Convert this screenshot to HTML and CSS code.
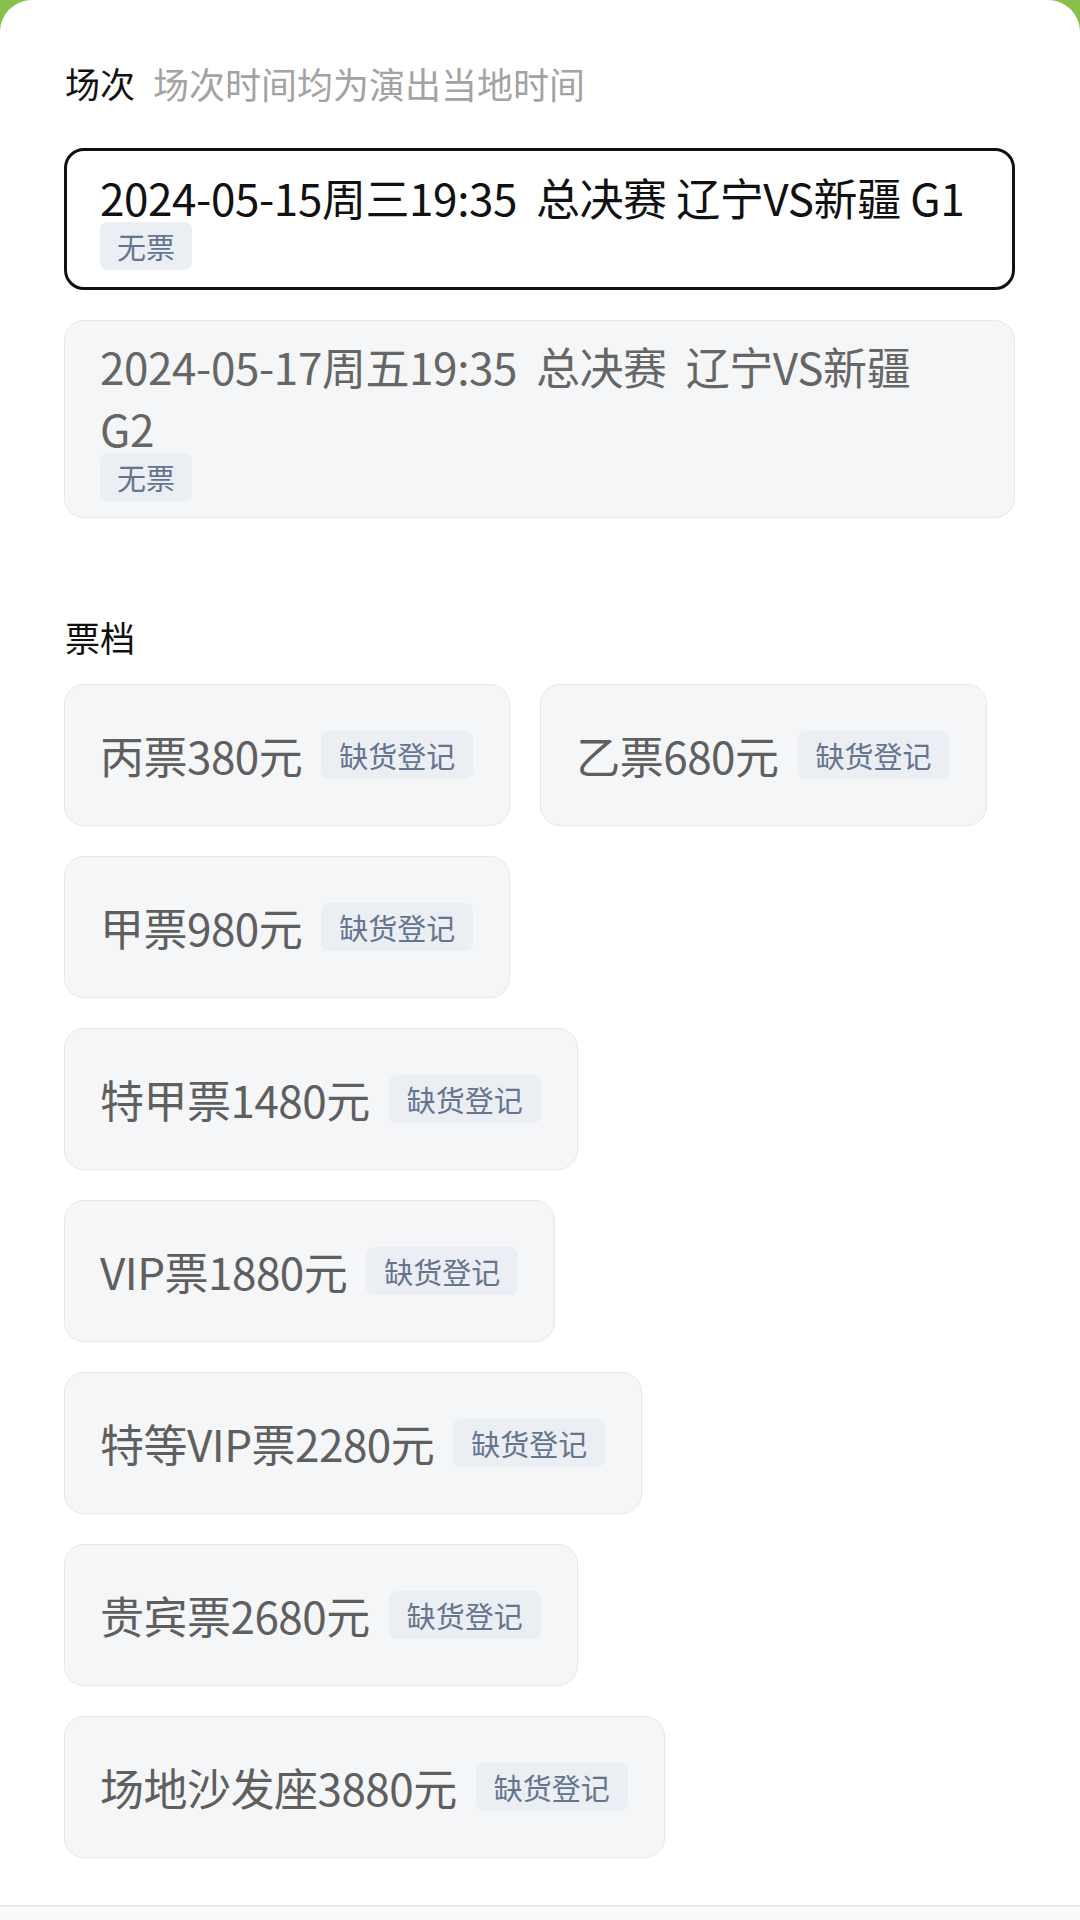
FILE: index.html
```html
<!DOCTYPE html>
<html lang="zh-CN">
<head>
<meta charset="utf-8">
<title>场次与票档</title>
<link rel="stylesheet" href="styles.css">
</head>
<body>
<div class="sheet">
  <section class="section">
    <div class="heading">
      <span class="heading-title">场次</span>
      <span class="heading-note">场次时间均为演出当地时间</span>
    </div>
    <div class="sessions">
      <div class="session session-active">
        <div class="session-name">2024-05-15周三19:35&nbsp; 总决赛 辽宁VS新疆 G1</div>
        <span class="tag">无票</span>
      </div>
      <div class="session">
        <div class="session-name">2024-05-17周五19:35&nbsp; 总决赛&nbsp; 辽宁VS新疆<br>G2</div>
        <span class="tag">无票</span>
      </div>
    </div>
  </section>

  <section class="section section-tickets">
    <div class="heading">
      <span class="heading-title">票档</span>
    </div>
    <div class="tickets">
      <div class="ticket"><span class="ticket-name">丙票380元</span><span class="tag">缺货登记</span></div>
      <div class="ticket"><span class="ticket-name">乙票680元</span><span class="tag">缺货登记</span></div>
      <div class="ticket"><span class="ticket-name">甲票980元</span><span class="tag">缺货登记</span></div>
      <div class="ticket"><span class="ticket-name">特甲票1480元</span><span class="tag">缺货登记</span></div>
      <div class="ticket"><span class="ticket-name">VIP票1880元</span><span class="tag">缺货登记</span></div>
      <div class="ticket"><span class="ticket-name">特等VIP票2280元</span><span class="tag">缺货登记</span></div>
      <div class="ticket"><span class="ticket-name">贵宾票2680元</span><span class="tag">缺货登记</span></div>
      <div class="ticket"><span class="ticket-name">场地沙发座3880元</span><span class="tag">缺货登记</span></div>
    </div>
  </section>
  <div class="bottom-bar"></div>
</div>
</body>
</html>
```

FILE: styles.css
```css
* {
  box-sizing: border-box;
}

html, body {
  margin: 0;
  padding: 0;
}

body {
  width: 1080px;
  height: 1920px;
  overflow: hidden;
  background: #89bf4d;
  font-family: "Noto Sans CJK SC", "Noto Sans", sans-serif;
}

.sheet {
  background: #ffffff;
  border-radius: 32px 32px 0 0;
  height: 1920px;
  padding: 59px 65px 0 64px;
  display: flex;
  flex-direction: column;
}

.heading {
  display: flex;
  align-items: center;
  height: 48px;
  line-height: 48px;
  margin-left: 1px;
}

.heading-title {
  font-size: 35px;
  color: #111111;
}

.heading-note {
  font-size: 36px;
  color: #a3a3a3;
  margin-left: 18px;
}

.sessions {
  display: flex;
  flex-direction: column;
  gap: 30px;
  margin-top: 41px;
}

.session {
  display: flex;
  flex-direction: column;
  align-items: flex-start;
  background: #f5f6f8;
  border: 1px solid #e6e7ea;
  border-radius: 20px;
  padding: 14px 34px 16px 35px;
}

.session-active {
  background: #ffffff;
  border: 3px solid #111111;
  padding: 15px 32px 17px 33px;
}

.session-name {
  font-size: 44px;
  line-height: 62px;
  letter-spacing: -0.4px;
  color: #666666;
  white-space: nowrap;
}

.session-active .session-name {
  color: #111111;
}

.session .tag {
  margin-top: -6px;
}

.tag {
  display: inline-block;
  height: 48px;
  line-height: 48px;
  padding: 0 17px;
  font-size: 29px;
  color: #66758f;
  background: #ebeef3;
  border-radius: 8px;
  white-space: nowrap;
}

.ticket .tag {
  padding: 0 18px;
}

.section-tickets {
  margin-top: 95px;
}

.tickets {
  display: flex;
  flex-wrap: wrap;
  align-items: flex-start;
  gap: 30px;
  margin-top: 23px;
}

.ticket {
  display: flex;
  align-items: center;
  height: 142px;
  padding: 0 36px 0 35px;
  background: #f5f6f8;
  border: 1px solid #e6e7ea;
  border-radius: 20px;
}

.ticket-name {
  font-size: 44px;
  line-height: 60px;
  letter-spacing: -0.5px;
  color: #5f5f5f;
  white-space: nowrap;
  margin-right: 19px;
}

.bottom-bar {
  margin: auto -65px 0 -64px;
  height: 15px;
  border-top: 2px solid #ebebeb;
  background: #fafafa;
}
```
